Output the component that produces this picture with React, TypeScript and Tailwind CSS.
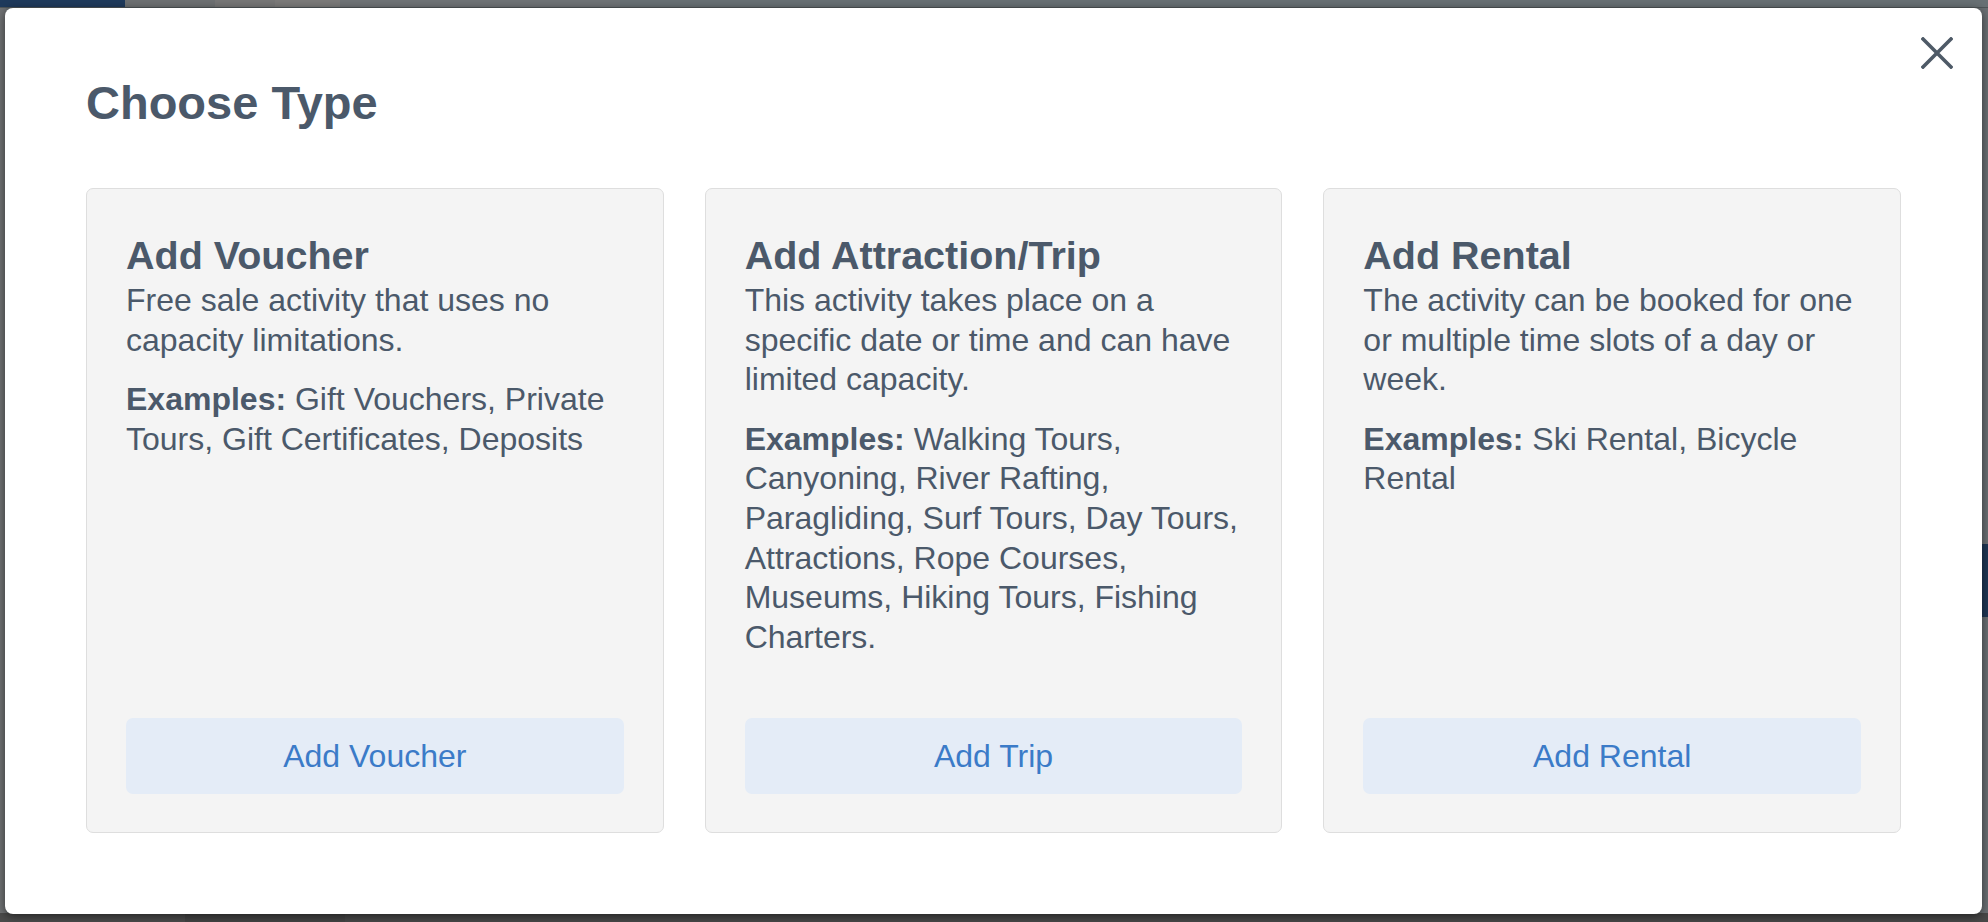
import React from "react";

type Option = {
  title: string;
  description: string;
  examples: string;
  action: string;
};

const options: Option[] = [
  {
    title: "Add Voucher",
    description: "Free sale activity that uses no capacity limitations.",
    examples: "Gift Vouchers, Private Tours, Gift Certificates, Deposits",
    action: "Add Voucher",
  },
  {
    title: "Add Attraction/Trip",
    description:
      "This activity takes place on a specific date or time and can have limited capacity.",
    examples:
      "Walking Tours, Canyoning, River Rafting, Paragliding, Surf Tours, Day Tours, Attractions, Rope Courses, Museums, Hiking Tours, Fishing Charters.",
    action: "Add Trip",
  },
  {
    title: "Add Rental",
    description:
      "The activity can be booked for one or multiple time slots of a day or week.",
    examples: "Ski Rental, Bicycle Rental",
    action: "Add Rental",
  },
];

function TypeCard({ option }: { option: Option }) {
  return (
    <div className="flex h-[645px] flex-col rounded-[7px] border border-[#dedede] bg-[#f4f4f4] px-[39px] pb-[38px] pt-[44px]">
      <h3 className="text-[39.5px] font-bold leading-[44px]">{option.title}</h3>
      <p className="mt-[4px] text-[32px] leading-[39.6px]">{option.description}</p>
      <p className="mt-[20px] text-[32px] leading-[39.6px]">
        <span className="font-bold">Examples:</span> {option.examples}
      </p>
      <button className="mt-auto h-[76px] w-full rounded-[7px] bg-[#e4ecf7] text-[32px] text-[#3b7bc8]">
        {option.action}
      </button>
    </div>
  );
}

export default function App() {
  return (
    <div className="relative h-[922px] w-[1988px] overflow-hidden bg-[#6a6f72] font-['Liberation_Sans',Arial,sans-serif]">
      {/* dimmed page behind the dialog */}
      <div className="flex h-full flex-col">
        <div className="flex h-[8px] border-b border-[#4f5558]">
          <div className="w-[125px] bg-[#1f3a5c]" />
          <div className="w-[90px] bg-[#6d7072]" />
          <div className="w-[60px] bg-[#767676]" />
          <div className="w-[65px] bg-[#7b7a79]" />
          <div className="w-[280px] bg-[#6f7376]" />
          <div className="flex-1 bg-[#687074]" />
        </div>
        <div className="flex flex-1">
          <div className="w-[6px] bg-[#707274]" />
          <div className="flex-1" />
          <div className="flex w-[8px] flex-col bg-[#6a6f73]">
            <div className="h-[536px]" />
            <div className="h-[73px] bg-[#1e3655]" />
          </div>
        </div>
        <div className="flex h-[9px] bg-[#474747]">
          <div className="w-[185px] bg-[#4b4b4b]" />
          <div className="w-[160px] bg-[#444444]" />
          <div className="flex-1 bg-[#484848]" />
        </div>
      </div>

      {/* dialog */}
      <div className="absolute left-[5px] top-[8px] h-[906px] w-[1977px] rounded-[8px] bg-white text-[#4b596a] shadow-[0_2px_10px_rgba(0,0,0,0.55)]">
        <button className="absolute right-[29px] top-[29px] flex h-[32px] w-[32px] items-center justify-center text-[#4e5a67]">
          <svg width="32" height="32" viewBox="0 0 32 32" fill="none">
            <path d="M2 2 L30 30 M30 2 L2 30" stroke="currentColor" strokeWidth="3.6" strokeLinecap="square" />
          </svg>
        </button>
        <div className="px-[81px] pt-[67px]">
          <h2 className="text-[47px] font-bold leading-[56px]">Choose Type</h2>
          <div className="mt-[57px] grid grid-cols-3 gap-[41px]">
            {options.map((o) => (
              <TypeCard key={o.title} option={o} />
            ))}
          </div>
        </div>
      </div>
    </div>
  );
}
